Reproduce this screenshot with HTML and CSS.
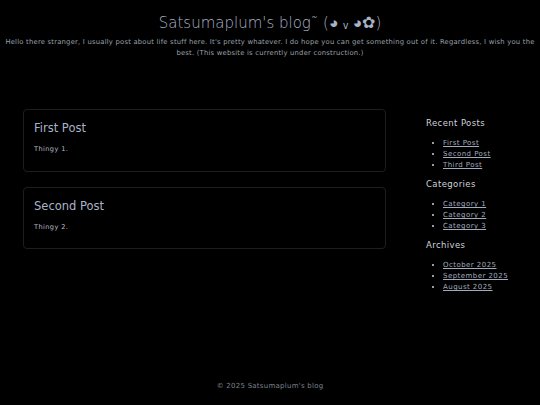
FILE: index.html
```html
<!DOCTYPE html>
<html>
<head>
<meta charset="utf-8">
<link rel="stylesheet" href="styles.css">
</head>
<body>
<header class="site-header">
  <h1 class="site-title">Satsumaplum's blog˜ (<span class="kao">◕</span> ᵥ <span class="kao">◕✿</span>)</h1>
  <p class="site-desc">Hello there stranger, I usually post about life stuff here. It's pretty whatever. I do hope you can get something out of it. Regardless, I wish you the best. (This website is currently under construction.)</p>
</header>
<div class="layout">
  <main class="posts">
    <article class="card">
      <h2 class="card-title">First Post</h2>
      <p class="card-text">Thingy 1.</p>
    </article>
    <article class="card">
      <h2 class="card-title">Second Post</h2>
      <p class="card-text">Thingy 2.</p>
    </article>
  </main>
  <aside class="sidebar">
    <h3 class="side-head">Recent Posts</h3>
    <ul class="side-list">
      <li><a href="#">First Post</a></li>
      <li><a href="#">Second Post</a></li>
      <li><a href="#">Third Post</a></li>
    </ul>
    <h3 class="side-head">Categories</h3>
    <ul class="side-list">
      <li><a href="#">Category 1</a></li>
      <li><a href="#">Category 2</a></li>
      <li><a href="#">Category 3</a></li>
    </ul>
    <h3 class="side-head">Archives</h3>
    <ul class="side-list">
      <li><a href="#">October 2025</a></li>
      <li><a href="#">September 2025</a></li>
      <li><a href="#">August 2025</a></li>
    </ul>
  </aside>
</div>
<footer class="site-footer">© 2025 Satsumaplum's blog</footer>
</body>
</html>
```
FILE: styles.css
```css
html, body {
  margin: 0;
  padding: 0;
  background: #000;
  height: 100%;
}
body {
  font-family: "DejaVu Sans", sans-serif;
  color: #b8bcc6;
  display: flex;
  flex-direction: column;
  min-height: 405px;
}
.site-header {
  text-align: center;
  padding: 13px 1px 0;
}
.site-title {
  margin: 0;
  font-size: 15px;
  font-weight: 300;
  color: #a9b3c7;
  line-height: 20px;
}
.kao {
  font-size: 1.05em;
  line-height: 1;
}
.site-desc {
  margin: 4px 0 0;
  font-size: 6.8px;
  letter-spacing: 0.22px;
  line-height: 11px;
  color: #9aa0ab;
}
.layout {
  display: flex;
  padding: 50px 0 0 23px;
}
.posts {
  width: 363px;
  display: flex;
  flex-direction: column;
  gap: 15px;
}
.card {
  border: 1px solid #1c1e23;
  border-radius: 4px;
  padding: 10px 10px 20px;
  height: 30.5px;
}
.card-title {
  margin: 0;
  font-size: 11.5px;
  font-weight: 400;
  color: #a9b3c7;
  line-height: 16px;
}
.card-text {
  margin: 9px 0 0;
  font-size: 6.6px;
  letter-spacing: 0.4px;
  line-height: 9px;
  color: #b8bcc6;
}
.sidebar {
  margin-left: 40px;
  padding-top: 8px;
}
.side-head {
  margin: 0;
  font-size: 8.5px;
  letter-spacing: 0.4px;
  font-weight: 400;
  color: #cfd2da;
  line-height: 12px;
}
.side-list {
  margin: 9px 0 7px;
  padding-left: 17px;
  font-size: 7px;
  letter-spacing: 0.45px;
  line-height: 11px;
}
.side-list li::marker {
  color: #cfd2da;
}
.side-list a {
  color: #a2aabd;
}
.site-footer {
  margin-top: auto;
  text-align: center;
  font-size: 7px;
  letter-spacing: 0.25px;
  color: #7d828c;
  padding-bottom: 15px;
}
```
